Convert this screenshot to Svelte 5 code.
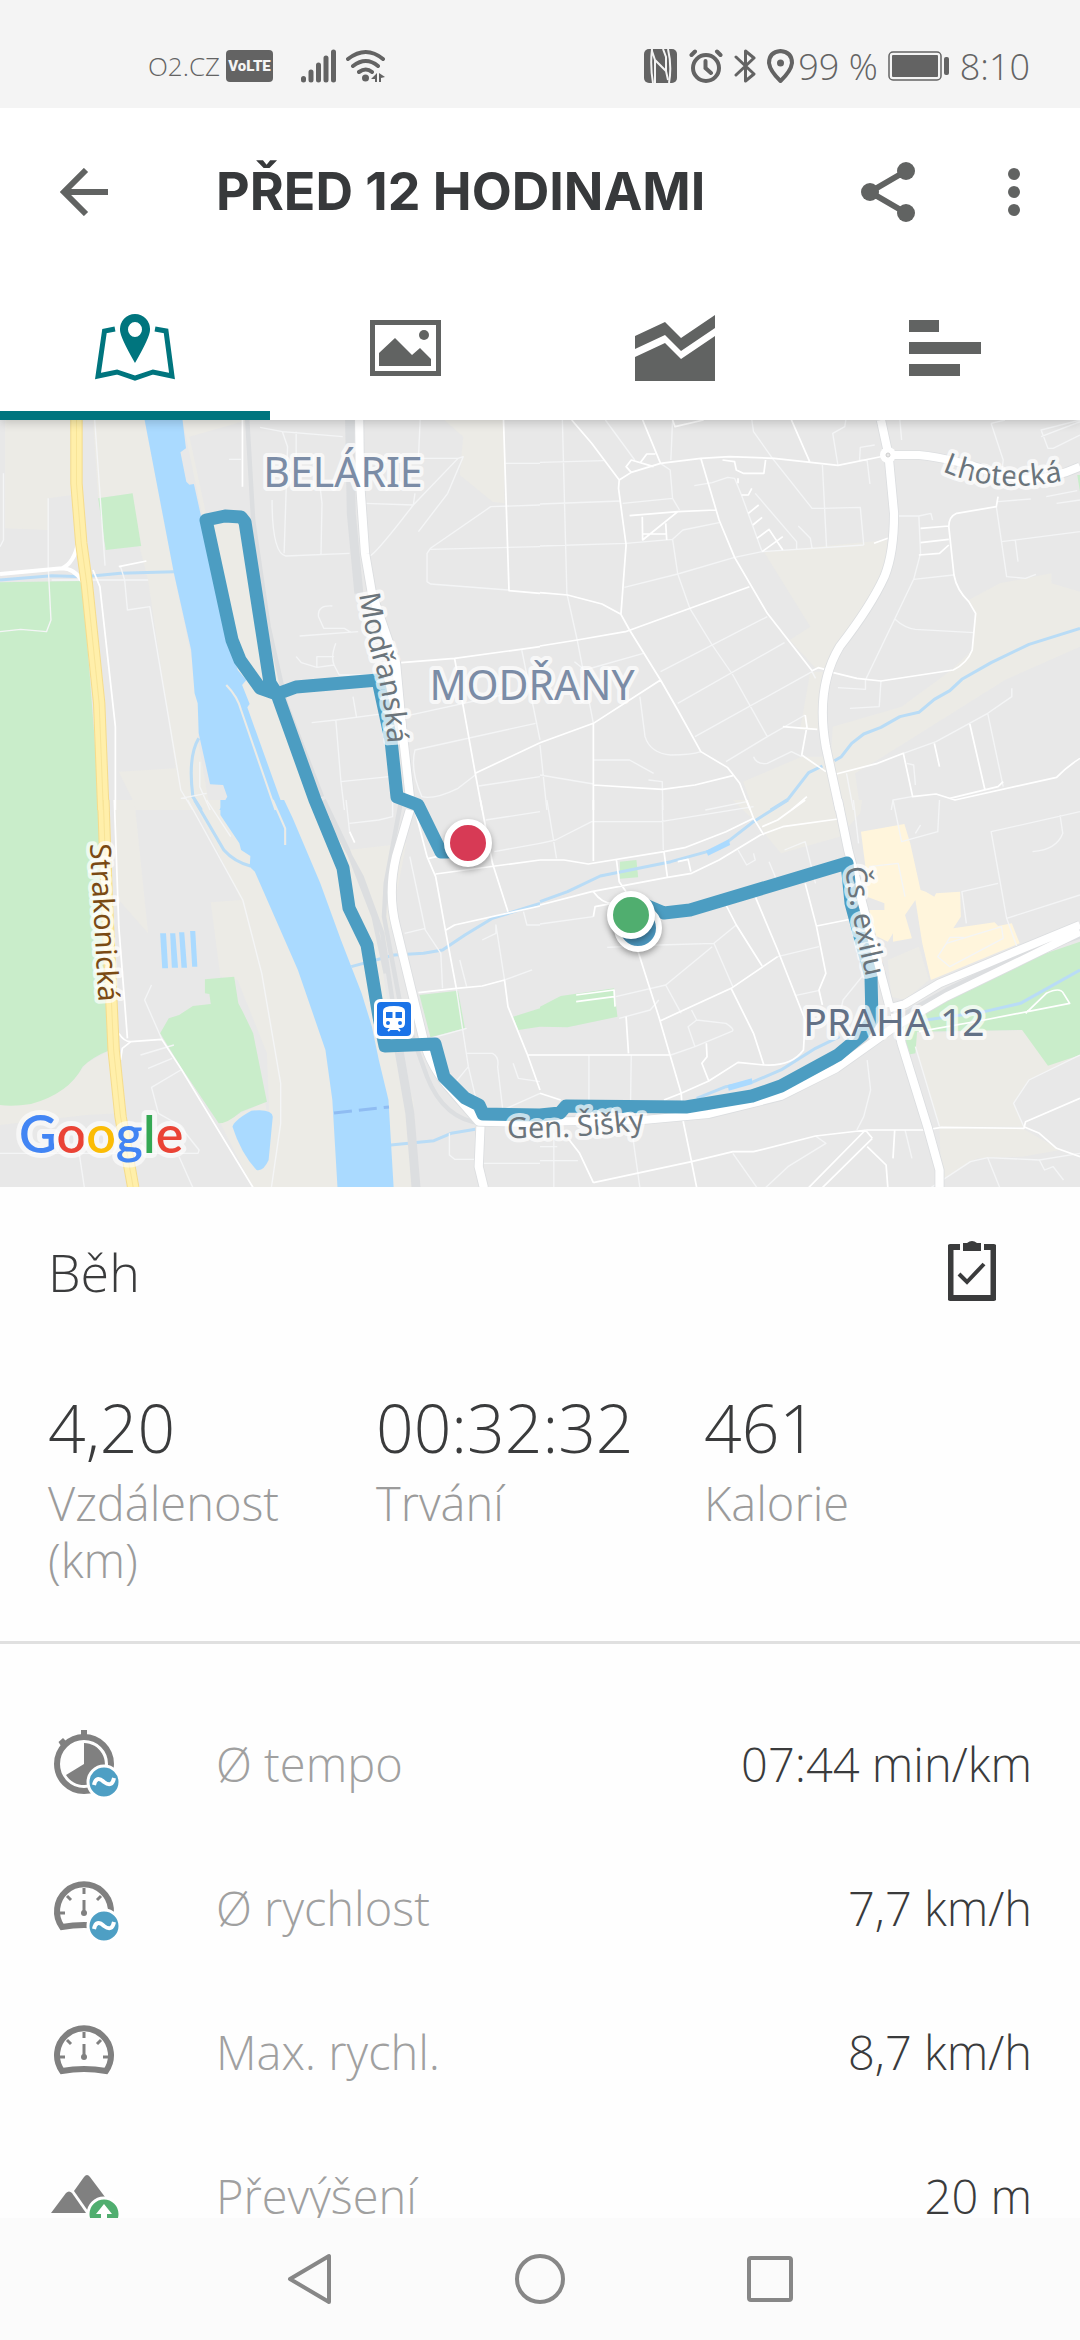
<script>
  // Map artwork is split in four tiles. Each tile has its own drawing grid of 1568 x 1170 units.
  const tiles = [
    {
      id: 'nw', x: 0, y: 420,
      beige: ['M15 0H205L210 225L140 235V330L15 325Z', 'M240 0H420L505 460L580 830L575 960L610 1170H390V1150L345 1055L510 1045L430 480L405 380L385 220L285 235L270 0Z', 'M530 0L720 0L550 50L600 290H720L745 340L790 700L850 900L935 1170H800L700 790L590 300Z', 'M1290 0L1345 50L1335 165L1430 245L1465 250L1462 0Z'],
      green: ['M285 235L385 220L410 378L307 390Z', 'M0 487L240 483L290 1170H0Z'],
      sand: [],
      water: ['M420 0H530L540 85L524 97L541 185L550 194L563 192L583 285L620 450L690 750L715 780L703 795L725 852L718 862L825 1170H637L660 1130L648 1095L610 1093L577 940L574 850L565 820L555 690L505 460Z'],
      streams: 'M0 480L150 467L245 470L350 460L505 455M577 955Q545 1010 560 1130L585 1170',
      spit: 'M657 795Q690 830 700 870L800 1170',
      rail: 'M718 0L735 300L780 620L830 850L935 1130',
      railWide: 'M1015 0L1020 280L1042 520',
      minor: 'M275 0L305 437M140 235V440M10 160V360L0 380M140 440L148 600L135 635L60 628L0 635M150 480H430M350 440L362 480L370 570L435 560L525 1110L560 1170M665 118H700M755 22L820 35L995 50M820 35L835 80L825 400M790 240Q790 400 830 408L1015 400M860 35V160M925 160L935 250L932 405M1075 408Q1100 390 1200 255L1330 115L1345 110L1300 220L1215 335M1060 250L1200 255L1205 220M1220 0L1215 115H1330M1468 130H1568M1568 255L1425 260L1250 385L1240 400V485L1250 492L1475 510M1250 388L1568 380M965 558Q920 555 925 590L940 625H1000L1020 638M870 648L1040 635M860 710L875 728L920 742L970 735Q960 710 975 670M920 742V710H970M970 735L985 765H1085M905 908L975 900L1120 880M975 900L990 1085L1000 1170M990 1085L1130 1070M1025 830L1035 890M1380 1065L1330 1105Q1260 1140 1225 1130Q1190 1050 1205 990L1555 910M1170 890L1568 800M1390 1098L1568 1070M1515 690L1568 960M580 1025V1100L610 1170M525 1135L600 1120',
      streets: 'M345 440L425 423M270 450L290 500L335 920V1170M704 0V200M1462 0L1478 512L1568 520M1165 728L1320 715L1568 680M1320 715L1380 1060L1400 1170M1380 1060L1568 968',
      avenues: 'M0 462L180 445Q215 430 228 365M180 445Q215 445 240 485',
      major: 'M1043 0L1045 180L1060 400L1080 520L1150 730L1165 900L1190 1130',
      highway: 'M222 0V190L236 370L252 490L288 850L300 1170'
    },
    {
      id: 'ne', x: 540, y: 420,
      beige: ['M650 395L1010 360L1000 460L870 680L840 745H800L725 660L785 620Z', 'M1568 515L1485 490V460L1335 490L1245 540L1265 580L1255 690L1195 750L1050 860L850 920L845 1010H760L590 1085L620 1170H930L915 1060L980 1020L1350 780L1568 680Z', 'M785 755H830L815 930H755Z'],
      green: ['M1560 165H1568V215Z'],
      sand: [],
      water: [],
      streams: 'M1568 625L1420 673L1310 728L1225 778L1190 812L1145 838L1100 877L1045 890L990 922L940 942L905 970L875 1010L855 1022M820 1038L780 1058L720 1138L670 1170',
      spit: '', rail: '', railWide: '',
      minor: 'M65 0L78 520L108 660L155 910M0 127L185 122M0 252L235 243M0 378L250 370M240 250L385 235L405 270M350 130L378 150L385 235M385 0L380 120M190 0L275 120M250 370L385 358L415 330L520 308M385 358L400 462L435 565L500 675L560 765L660 950M245 502L400 462L565 412L645 395M350 755L660 590M400 850L710 668M450 950L790 755L800 775M540 1025L660 950L770 885M615 0L620 35L675 115L790 265H820L930 262L940 375M820 135L832 380M645 395L940 375M448 197L500 188L545 172L565 175L585 225L645 395M625 220L745 365V390M750 318L785 355L790 385M888 0L885 20L850 40L865 135M972 75L930 82L928 120L950 122L958 192M1045 0L1050 60M1310 10L1345 120L1340 165M1310 10L1350 0M1568 0L1455 30L1475 85H1490L1568 45M1455 50L1568 5M1040 288H1100L1135 280L1140 300M1100 288L1105 400L1085 478L1030 597L945 780V808L865 803M1085 478L1200 465M1030 597Q1060 625 1090 628L1260 638M990 783L985 860L900 865M1325 260L1355 470L1410 475L1440 463M1340 365L1568 335M1380 360L1388 425M1330 245L1425 237M1470 230L1560 212M1500 250L1568 240M1055 1000L1150 965L1300 880L1370 830V805M1300 880L1345 1100M290 830L305 950Q320 1000 380 1005Q440 1005 467 995M0 1065L155 1092M155 1020H260L330 1060M315 1080L355 1085L357 1170M620 1010Q630 1035 660 1030L730 995L760 1010M0 975L20 1170M100 725L130 750L300 700M1065 1030L1085 1035L1090 1095M1020 1170L1025 1140L1080 1130M480 1170L600 1145M890 1060L910 1170',
      streets: 'M92 0L150 70L230 180L265 157L350 130L467 115L550 110L680 115L865 136L1000 108M298 0L350 130M385 0L392 20L475 0M730 0L783 125M230 180L228 205L250 375L235 583L180 552L80 525L0 518M467 115L520 300L565 412L660 580L790 752L808 743L840 752M0 678L108 660L248 635L608 500M235 583L260 630L350 780L400 870L467 995L545 1043L580 1090L610 1170M0 968L155 910L350 780M155 910V1170M155 1095L355 1108L450 1095L560 1067M840 755L920 775L990 783L1200 750Q1240 730 1255 690L1265 580L1245 545Q1210 510 1202 465L1187 320Q1187 290 1210 280L1325 260L1330 230M860 1062L980 1030L1055 1000L1082 1130L1150 1122L1205 1140L1500 1072Q1530 1040 1568 1015M265 157L250 140L265 120L330 140M290 130L310 102H335M260 287L400 275L510 270M297 290L298 360L400 275M365 310L368 360M300 342H368M530 120L565 125L570 150L590 160H650L655 120M575 190V175M585 225H605L615 205M605 280L635 255M618 315L645 292M630 355L665 328L705 390M645 395L705 350M970 370L1010 355M1105 325L1187 318M1105 368L1187 358M1100 405L1160 400L1187 375M1248 912L1292 1110M1145 970L1160 1040M770 885L775 920L760 1005L830 1055M705 920L805 928M1190 1135L1330 1100L1345 1085M730 1170L775 1130',
      avenues: '',
      major: 'M990 0L1012 105L1028 280Q1028 400 1000 470Q960 560 870 680Q800 800 830 980L870 1170M1010 105H1100Q1200 115 1340 165Q1440 200 1568 140',
      highway: ''
    },
    {
      id: 'sw', x: 0, y: 800,
      beige: ['M0 915L100 905Q200 870 250 790L320 750L345 940L250 945L0 975Z', 'M700 300L612 307L640 530L690 540L775 760L790 1163H1215L1200 900L1140 720L1110 500L1180 130L1010 150L900 0H560Z', 'M735 1163L640 970L770 905L800 1163Z', 'M330 0H390L430 400L345 300Z'],
      green: ['M0 0H288L320 750Q270 770 240 800Q200 880 90 912Q40 920 0 915Z', 'M595 538L680 530L692 610L705 635L735 700L775 905L700 935Q660 970 635 970L525 800L465 700L490 655L520 645L560 618L612 612L608 582L595 580Z', 'M1218 585L1330 572L1350 685L1250 712Z', 'M1490 650L1568 625V680L1505 690Z'],
      sand: [],
      water: ['M640 0H825L850 55L930 250L990 420L1050 580L1080 680L1100 780L1128 900L1143 1163H980L965 900L945 750L865 510L740 215L725 200L727 168L700 150L695 130L640 45Z', 'M675 980Q680 960 730 932Q790 925 792 950L780 1080Q765 1115 745 1110Q700 1060 675 980Z', 'M465 400H482L488 505H471ZM494 400H509L517 503H499ZM520 397H535L543 503H527ZM552 393H567L573 500H558Z'],
      streams: 'M565 0L650 150Q680 185 727 198M1568 310L1430 355L1350 405L1285 450L1230 460L1145 465L1020 500M1135 1035L1260 1022L1310 1000L1380 988',
      spit: 'M792 0L828 85V135',
      rail: 'M940 0L1010 150L1085 350L1120 520M960 60L1050 230L1110 400L1145 640L1190 940M1165 0L1120 250L1115 350L1160 600L1240 830Q1290 960 1400 970L1568 975',
      railWide: 'M1150 700L1190 940L1208 1163',
      minor: 'M545 0L705 300L760 520L815 850V970L788 1163M440 555L420 600L470 718M408 765L505 735M430 805L500 775M525 810L440 862L460 940L520 975L578 1050L575 1060H0M230 1060L245 1163M520 1070L560 1163M1005 0L1015 95M1015 70L1100 60L1140 50V0M1410 60L1568 35M1435 155L1568 130M1190 170L1235 390L1280 460L1285 565M1175 400L1235 385M1400 420L1440 400V375L1465 540L1545 510M1325 565L1360 800L1385 910M1355 760H1430Q1450 770 1445 800L1460 930L1568 880M1250 715L1355 685M1305 1000V1065L1320 1078H1385M1395 1090H1568M1335 480L1355 560M1520 335L1530 375H1568M1490 790L1505 835L1568 845M1320 850L1360 800M600 0L670 110',
      streets: 'M1205 30L1240 170L1265 230L1295 400L1325 565M1245 175L1290 165M1265 222L1568 180M1395 0L1430 190L1475 335M1295 390L1320 375L1568 318M1215 578L1325 565L1400 558L1465 540L1475 620L1530 760L1568 870M1530 765H1568M345 700Q360 725 380 725L470 718L525 805L735 1163M380 725L355 745L350 780M332 0L345 380L370 715M1015 95L1030 128',
      avenues: '',
      major: 'M1190 30L1150 170Q1125 280 1150 380L1230 720Q1250 800 1310 870L1390 965L1568 970M1395 980L1390 1100L1405 1163',
      highway: 'M300 0L310 300L330 750L350 950L387 1163'
    },
    {
      id: 'se', x: 540, y: 800,
      beige: ['M560 0H935L930 40L870 110L700 160L660 110L640 80Z', 'M1010 480L1100 440L1130 540L1060 600L1020 590Z', 'M1090 700L1405 690L1475 795L1568 765L1420 840L1375 910L1405 980H1160L1090 740Z', 'M1160 985H1400L1510 1050L1400 1070L1270 1075L1165 1140Z'],
      green: ['M1568 425L1300 520L1120 615L1060 680L1065 765L1090 760L1095 695L1400 690L1475 797L1568 765Z', 'M0 620L60 588L215 565L225 650L80 682L0 680Z', 'M232 185L280 180L285 232L232 236Z'],
      sand: ['M932 95L1058 72L1075 130L1105 270L1120 275L1145 290L1150 280L1220 275L1222 350L1200 385L1320 367L1330 378L1370 370L1393 430L1135 540L1110 430L1090 300L1060 345L1080 415L1025 425V400L1010 425L960 400L940 330L1000 330V310L950 290L945 200Z'],
      water: ['M482 152L548 118L552 135L488 167Z', 'M545 855L615 835L617 852L548 872Z'],
      streams: 'M720 0L620 65L520 145L380 185L175 228L80 275L0 305M455 895L540 860L620 845L700 810L800 745L870 710M1120 660L1290 635L1395 610L1568 510',
      spit: '',
      rail: 'M0 955L420 950L700 872L860 785L1060 640L1180 570L1380 470L1568 410',
      railWide: '',
      minor: 'M20 0L48 175M0 130L45 120L150 65H350L620 20M355 0L358 150M690 470L810 440M740 587L808 572M195 442L345 435L505 430L560 560M505 430L570 375M365 555L500 440M410 640L365 555L220 590M440 630L455 660L540 670Q570 690 555 695L450 740L430 680L455 660M450 740L380 765M142 765V900M265 765L263 900M230 655L320 630L345 600M155 350L0 372M1025 0L1050 125L1155 95L1160 0M1568 35L1310 95L1355 355L1385 440M1355 355L1568 285M1510 45L1518 100Q1500 150 1430 155M1238 370L1225 275L1330 250M950 780L960 870L940 950L920 990M1060 990L1080 1075M1090 740L1160 980M560 1060L630 1163M1135 1163L1250 1085L1300 1073L1335 1163M1300 1073L1450 1080L1568 1060M1405 980L1375 910L1420 840L1568 765M0 1082H110M40 1000V1163M270 1015L290 1163M655 1163L720 1100L830 1030L800 1008M710 150L770 125L800 250M665 185L685 235M575 150L600 195L625 180L620 160M1450 1080L1465 1110L1490 1100L1520 1140M910 0L925 130M955 200L1040 190L1060 290M1155 470L1180 430L1340 380L1345 415L1190 500ZM1180 430L1190 412H1230M860 690L880 600L935 530M1090 100L1105 75M0 1040H50',
      streets: 'M0 180H70L140 192L360 155L420 143L540 95L620 55L600 0M620 55L650 105M155 0V183M0 315L150 275L370 232L440 220L520 180L640 105L705 80L865 57M360 155L370 232M285 455L345 650L410 880L415 960L440 1085L455 1163M540 315L570 375L645 498M625 290L690 450L770 660L765 750Q730 800 650 795L575 787L490 843L410 880L360 900M690 470L555 565L350 662M555 565L620 700L650 795M770 250L803 380L830 520L810 570L820 615M803 378L905 357M0 765H375M155 1148L440 1085L560 1055H620L800 1008L950 990H1120L1165 982L1405 985L1410 965L1568 895M1405 980L1450 1000L1500 1045L1568 1070M70 1000L115 1060L155 1148M0 880L60 900M222 180L230 245L250 275M400 185L430 178L438 215M155 275Q180 310 210 310L160 320L155 350M250 650L257 760M105 585L215 570L218 620M105 605L215 590M483 730L485 770L470 790L490 843M945 990L780 1163M965 1015L820 1163M945 990L965 1015M950 1040L1005 1095L1010 1163M1030 990L1025 1075M645 80L690 60L770 0M1410 640L1470 580Q1510 560 1520 580L1538 610L1290 660L1100 695',
      avenues: '',
      major: 'M865 0L895 150L1015 620M1015 625L1060 612L1160 550L1300 490L1380 455L1568 375M1030 680L1180 590L1400 480L1568 395M0 965L300 960L490 942L700 888L860 805L1030 680M1030 640L1050 730L1125 980L1160 1110V1163',
      highway: ''
    }
  ];

  const route = 'M448 852H441L418 805L397 797L391 740L378 680L296 687L277 694L260 688L240 660L232 640L206 520L225 516L241 517L245 522L270 683L277 694L315 800L343 868L349 908L367 945L379 1017L385 1046L435 1044L444 1077L465 1098L479 1105L483 1114L540 1115L560 1113L566 1106L686 1107L752 1096L781 1086L838 1055L862 1035L872 1020L871 977L851 903L847 863L690 910L664 913L645 905';

  const stats = [
    { value: '4,20', label: 'Vzdálenost (km)' },
    { value: '00:32:32', label: 'Trvání' },
    { value: '461', label: 'Kalorie' }
  ];

  const details = [
    { icon: 'pace', badge: 'average', label: 'Ø tempo', value: '07:44 min/km' },
    { icon: 'speed', badge: 'average', label: 'Ø rychlost', value: '7,7 km/h' },
    { icon: 'speed', badge: '', label: 'Max. rychl.', value: '8,7 km/h' },
    { icon: 'hills', badge: 'up', label: 'Převýšení', value: '20 m' }
  ];

  const tabs = ['Mapa', 'Fotky', 'Grafy', 'Mezičasy'];
  let active = $state(0);
</script>

{#snippet layer(key, cls)}
  {#each tiles as t (t.id)}
    <g transform="translate({t.x} {t.y}) scale(0.34439 0.33333)">
      {#if Array.isArray(t[key])}
        {#each t[key] as d}<path class={cls} {d} />{/each}
      {:else if t[key]}
        <path class={cls} d={t[key]} />
      {/if}
    </g>
  {/each}
{/snippet}

<div class="screen">
  <div class="status">
    <span class="carrier">O2.CZ</span>
    <span class="volte">VoLTE</span>
    <svg class="signal" width="36" height="34" viewBox="0 0 36 34" aria-hidden="true">
      <path d="M2.500 29.500V31M10 23V31M17.500 16V31M25 9V31M32.500 3V31" fill="none" stroke="currentColor" stroke-width="5" stroke-linecap="round" />
    </svg>
    <svg class="wifi" width="40" height="34" viewBox="0 0 40 34" aria-hidden="true">
      <path d="M2 10Q20 -4 37 10M7 17Q20 7 32 17M13 23Q20 18 26 23" fill="none" stroke="currentColor" stroke-width="4" stroke-linecap="round" />
      <circle cx="19.500" cy="29" r="3.500" fill="currentColor" />
      <path d="M31 24V33H29V30H25ZM33 24V33H35V29L39 28Z" fill="currentColor" />
    </svg>
    <span class="spacer"></span>
    <svg width="34" height="34" viewBox="0 0 34 34" aria-hidden="true">
      <rect width="33" height="34" rx="5" fill="currentColor" />
      <path d="M25 34Q28 17 24 0" fill="none" stroke="#f4f4f4" stroke-width="2" />
      <path d="M8 0Q6 17 9 34M11 34V11L22 22V8L19 0M11 11L8 2M22 22L24 31" fill="none" stroke="#f4f4f4" stroke-width="2" />
    </svg>
    <svg class="alarm" width="34" height="34" viewBox="0 0 34 34" fill="none" stroke="currentColor" stroke-width="4" stroke-linecap="round" aria-hidden="true">
      <circle cx="17" cy="19" r="13" /><path d="M16.500 12V19L22 24M2.500 6L6 2.500M31.500 6L28 2.500" />
    </svg>
    <svg class="bt" width="22" height="36" viewBox="0 0 22 36" fill="none" stroke="currentColor" stroke-width="3" stroke-linejoin="round" stroke-linecap="round" aria-hidden="true">
      <path d="M2 9L20 26L11.500 33V3L20 10L2 27" />
    </svg>
    <svg class="pin" width="27" height="34" viewBox="0 0 27 34" aria-hidden="true">
      <path d="M13.500 2Q25 3 25 14Q24 22 13.500 32Q3 22 2 14Q2 3 13.500 2Z" fill="none" stroke="currentColor" stroke-width="4" stroke-linejoin="round" />
      <circle cx="13.500" cy="14" r="3.500" fill="currentColor" />
    </svg>
    <span class="clock">99 %</span>
    <svg class="battery" width="62" height="30" viewBox="0 0 62 30" aria-hidden="true">
      <rect x="1" y="1" width="52" height="28" rx="4" fill="none" stroke="currentColor" stroke-width="1.500" />
      <rect x="4" y="4" width="46" height="22" rx="1" fill="currentColor" />
      <rect x="56" y="6" width="5" height="18" rx="2" fill="currentColor" />
    </svg>
    <time class="clock">8:10</time>
  </div>

  <header class="toolbar">
    <button class="icon-btn" aria-label="Zpět">
      <svg width="48" height="48" viewBox="0 0 48 48" fill="none" stroke="currentColor" stroke-width="6"><path d="M48 24H5M26 2L4 24L26 46" /></svg>
    </button>
    <h1>PŘED 12 HODINAMI</h1>
    <button class="icon-btn" aria-label="Sdílet">
      <svg width="54" height="60" viewBox="0 0 54 60" fill="currentColor">
        <path d="M45 9L9 30L45 51" fill="none" stroke="currentColor" stroke-width="6" />
        <circle cx="45" cy="9" r="9" /><circle cx="9" cy="30" r="9" /><circle cx="45" cy="51" r="9" />
      </svg>
    </button>
    <button class="icon-btn more" aria-label="Další">
      <svg width="12" height="48" viewBox="0 0 12 48" fill="currentColor"><circle cx="6" cy="6" r="6" /><circle cx="6" cy="24" r="6" /><circle cx="6" cy="42" r="6" /></svg>
    </button>
  </header>

  <nav class="tabs" aria-label="Zobrazení">
    {#each tabs as name, i (name)}
      <button class="tab" class:active={active === i} aria-label={name} onclick={() => (active = i)}>
        <svg width="80" height="68" viewBox="0 0 80 68" fill="currentColor" aria-hidden="true">
          {#if i === 0}
            <path d="M20 15L9.500 17L3 62L22 58L40 64L58 58L77 62L71 17L60 15" fill="none" stroke="currentColor" stroke-width="5" />
            <path fill-rule="evenodd" d="M40 0A15 15 0 0 1 55 16Q55 23 40 49Q25 23 25 16A15 15 0 0 1 40 0ZM40 8A7 7.500 0 1 0 40 23A7 7.500 0 1 0 40 8Z" />
          {:else if i === 1}
            <path fill-rule="evenodd" d="M5 6H76V62H5ZM10 11V57H71V11Z" />
            <path d="M14 52V39L30 24L47 41L55 34L66 45V52Z" /><circle cx="59" cy="21" r="5" />
          {:else if i === 2}
            <path d="M0 22L30 8L46 24L80 1V14L46 37L30 21L0 35Z" /><path d="M0 43L30 29L46 45L80 22V67H0Z" />
          {:else}
            <path d="M4 6H34V18H4ZM4 28H76V40H4ZM4 50H55V62H4Z" />
          {/if}
        </svg>
      </button>
    {/each}
  </nav>

  <section class="map" aria-label="Mapa trasy">
    <svg viewBox="0 420 1080 767" role="img" aria-label="Trasa běhu, Praha 12">
      <rect y="420" width="1080" height="767" fill="#e8e8e8" />
      {@render layer('beige', 'beige')}
      {@render layer('green', 'green')}
      {@render layer('sand', 'sand')}
      {@render layer('streams', 'stream')}
      {@render layer('water', 'water')}
      {@render layer('spit', 'spit')}
      <path d="M334 1113L389 1107" stroke="#8fbcf2" stroke-width="3" stroke-dasharray="18 7" />
      {@render layer('railWide', 'rail-wide')}
      {@render layer('rail', 'rail')}
      {@render layer('minor', 'minor')}
      {@render layer('streets', 'street')}
      {@render layer('avenues', 'avenue')}
      {@render layer('major', 'major-edge')}
      {@render layer('major', 'major')}
      {@render layer('highway', 'highway-edge')}
      {@render layer('highway', 'highway')}
      {@render layer('highway', 'highway-line')}
      <circle cx="888" cy="455" r="8" fill="#fff" />
      <circle cx="888" cy="455" r="2" fill="#e8e8e8" stroke="#d0d0d0" />

      <path class="route" d={route} />

      <defs>
        <path id="p-modr" d="M359 594Q366 640 377 672Q386 706 388 750" />
        <path id="p-strak" d="M90 844L99 1010" />
        <path id="p-lhot" d="M942 471Q1000 497 1075 478" />
        <path id="p-exilu" d="M845 868Q852 920 869 990" />
        <path id="p-gen" d="M507 1138Q580 1139 650 1129" />
      </defs>
      <g class="label street-name">
        <text><textPath href="#p-modr">Modřanská</textPath></text>
        <text class="brown"><textPath href="#p-strak">Strakonická</textPath></text>
        <text><textPath href="#p-lhot">Lhotecká</textPath></text>
        <text><textPath href="#p-exilu">Čs. exilu</textPath></text>
        <text><textPath href="#p-gen">Gen. Šišky</textPath></text>
      </g>
      <g class="label district" text-anchor="middle">
        <text x="343" y="487">BELÁRIE</text>
        <text x="532" y="700">MODŘANY</text>
        <text x="894" y="1036" class="dark">PRAHA 12</text>
      </g>

      <g transform="translate(394 1019)">
        <rect x="-20" y="-20" width="40" height="40" rx="6" fill="#fff" />
        <rect x="-17" y="-17" width="34" height="34" rx="4" fill="#1a73e8" />
        <path fill="#fff" fill-rule="evenodd" d="M-11 -8Q-11 -13 0 -13Q11 -13 11 -8V4Q11 9 6 9H-6Q-11 9 -11 4ZM-8 -7V-1H-1.500V-7ZM1.500 -7V-1H8V-7ZM-6 2A2 2 0 1 0 -6 6A2 2 0 1 0 -6 2ZM6 2A2 2 0 1 0 6 6A2 2 0 1 0 6 2Z" />
        <path d="M-6 12L-3 9M6 12L3 9M-4 10H4" stroke="#fff" stroke-width="2" />
      </g>

      <g class="markers">
        <circle cx="468" cy="843" r="21" fill="#d73a55" />
        <circle cx="638" cy="928" r="21" fill="#4a94bb" />
        <circle cx="631" cy="915" r="21" fill="#50ae6f" />
      </g>

      <text class="google" x="19" y="1153"><tspan fill="#4285f4">G</tspan><tspan fill="#ea4335">o</tspan><tspan fill="#fbbc05">o</tspan><tspan fill="#4285f4">g</tspan><tspan fill="#34a853">l</tspan><tspan fill="#ea4335">e</tspan></text>
    </svg>
  </section>

  <main class="content">
    <div class="activity">
      <h2>Běh</h2>
      <button class="icon-btn note" aria-label="Souhrn">
        <svg width="48" height="60" viewBox="0 0 48 60" aria-hidden="true">
          <path d="M12 6H2.500V57H45.500V6H36" fill="none" stroke="currentColor" stroke-width="6" stroke-linejoin="round" />
          <path d="M15 2H19Q24 -2 29 2H33V10H15Z" fill="currentColor" />
          <path d="M11 33L19 41L36 23" fill="none" stroke="currentColor" stroke-width="4" />
        </svg>
      </button>
    </div>

    <dl class="stats">
      {#each stats as s (s.label)}
        <div class="stat"><dd>{s.value}</dd><dt>{s.label}</dt></div>
      {/each}
    </dl>

    <dl class="details">
      {#each details as r (r.label)}
        <div class="row">
          <svg width="72" height="72" viewBox="0 0 72 72" aria-hidden="true">
            {#if r.icon === 'pace'}
              <circle cx="36" cy="36" r="27" fill="none" stroke="#808080" stroke-width="6" />
              <path d="M33 2H39V9H33ZM10.500 14L15 10L18 13L13 18Z" fill="#808080" />
              <path d="M36 36V15A21 21 0 1 1 18 47Z" fill="#808080" />
            {:else if r.icon === 'speed'}
              <path d="M14 55A27 27 0 1 1 58 55Q36 51 14 55Z" fill="none" stroke="#808080" stroke-width="6" />
              <path d="M36 16V22M12 41H17M60 41H55M19 24L23 28M53 24L49 28M36 28V41" stroke="#808080" stroke-width="3" />
              <circle cx="36" cy="41" r="3" fill="#808080" />
            {:else}
              <path d="M26 31L36 17Q39 13 42 17L60 41L45 53L40 51Z" fill="#808080" />
              <path d="M3 53L18 33Q21 30 24 33L38 53Z" fill="#808080" />
            {/if}
            {#if r.badge === 'average'}
              <circle cx="56" cy="54" r="16" fill="#4e9fc4" stroke="#fff" stroke-width="3" />
              <path d="M46 57Q48 47 56 54Q64 60 66 50" fill="none" stroke="#fff" stroke-width="4" />
            {:else if r.badge === 'up'}
              <circle cx="56" cy="54" r="16" fill="#50ae6f" stroke="#fff" stroke-width="3" />
              <path d="M56 44L64 54H59V64H53V54H48Z" fill="#fff" />
            {/if}
          </svg>
          <dt>{r.label}</dt>
          <dd>{r.value}</dd>
        </div>
      {/each}
    </dl>
  </main>

  <nav class="system" aria-label="Systém">
    <button aria-label="Zpět na předchozí"><svg width="48" height="52" viewBox="0 0 48 52"><path d="M43 3V49L4 26Z" /></svg></button>
    <button aria-label="Domů"><svg width="52" height="52" viewBox="0 0 52 52"><circle cx="26" cy="26" r="23" /></svg></button>
    <button aria-label="Přehled"><svg width="48" height="52" viewBox="0 0 48 52"><rect x="3" y="5" width="42" height="42" rx="2" /></svg></button>
  </nav>
</div>

<style>
  :global(body) {
    background: #fff;
  }

  .screen {
    display: flex;
    flex-direction: column;
    height: 100vh;
    background: #fefefe;
    color: #3a3b3c;
    font-family: 'Open Sans', 'Noto Sans', sans-serif;
    font-weight: 300;
  }

  svg {
    display: block;
    flex: none;
  }

  button {
    display: flex;
    align-items: center;
    justify-content: center;
    padding: 0;
    border: 0;
    background: none;
    color: #616362;
    cursor: pointer;
  }

  h1, h2, dl, dt, dd {
    margin: 0;
  }

  .status {
    display: flex;
    align-items: center;
    box-sizing: border-box;
    height: 108px;
    padding: 24px 50px 0 148px;
    background: #f4f4f4;
    color: #636363;
  }

  .carrier {
    font-size: 26px;
  }

  .volte {
    width: 47px;
    margin-left: 6px;
    border-radius: 4px;
    background: #636363;
    color: #f4f4f4;
    font: 900 15px/32px Roboto, sans-serif;
    text-align: center;
  }

  .signal {
    margin-left: 28px;
  }

  .wifi {
    margin-left: 9px;
  }

  .spacer {
    flex: 1;
  }

  .alarm {
    margin-left: 11px;
  }

  .bt {
    margin-left: 11px;
  }

  .pin {
    margin-left: 11px;
  }

  .clock {
    margin-left: 4px;
    font-size: 36px;
    white-space: nowrap;
  }

  .battery {
    margin: 0 6px 0 10px;
  }

  .toolbar {
    position: relative;
    z-index: 2;
    display: flex;
    align-items: center;
    height: 168px;
    padding: 0 60px;
    background: #fff;
  }

  h1 {
    flex: 1;
    margin-left: 108px;
    color: #37393b;
    font: 700 52px/64px Inter, sans-serif;
    white-space: nowrap;
  }

  .more {
    margin-left: 93px;
  }

  .tabs {
    position: relative;
    z-index: 1;
    display: grid;
    grid-template-columns: repeat(4, 1fr);
    background: #fff;
    box-shadow: 0 2px 10px rgba(0, 0, 0, 0.2);
  }

  .tab {
    box-sizing: border-box;
    height: 144px;
    padding-top: 9px;
    border-bottom: 9px solid transparent;
  }

  .tab.active {
    border-color: #00757e;
    color: #00757e;
  }

  .map svg {
    width: 100%;
    height: auto;
  }

  .map path {
    stroke-linejoin: round;
  }

  .beige { fill: #ecebe6; }
  .green { fill: #c9edca; }
  .sand { fill: #fff5dc; }
  .water { fill: #aadaff; }
  .stream { fill: none; stroke: #b9dcf6; stroke-width: 9; }
  .spit { fill: none; stroke: #ecebe6; stroke-width: 6; }
  .rail { fill: none; stroke: #dcdee0; stroke-width: 13; }
  .rail-wide { fill: none; stroke: #dcdee0; stroke-width: 26; }
  .minor { fill: none; stroke: #f4f5f6; stroke-width: 4; }
  .street { fill: none; stroke: #fff; stroke-width: 5; }
  .avenue { fill: none; stroke: #fff; stroke-width: 12; }
  .major-edge { fill: none; stroke: #dcdee0; stroke-width: 29; }
  .major { fill: none; stroke: #fff; stroke-width: 24; }
  .highway-edge { fill: none; stroke: #f5dc8d; stroke-width: 36; }
  .highway { fill: none; stroke: #ffefaa; stroke-width: 30; }
  .highway-line { fill: none; stroke: #f8e498; stroke-width: 3; }

  .route {
    fill: none;
    stroke: #4c9dc2;
    stroke-width: 13;
    stroke-linecap: round;
  }

  .label {
    font-family: 'Noto Sans', 'Open Sans', sans-serif;
    font-weight: 400;
    paint-order: stroke;
    stroke: rgba(255, 255, 255, 0.7);
    stroke-width: 8px;
    stroke-linejoin: round;
  }

  .street-name { fill: #6b757c; font-size: 29px; }
  .brown { fill: #7a4a14; }
  .district { fill: #7b8ca6; font-size: 41px; }
  .dark { fill: #637186; font-size: 39px; }

  .markers circle {
    stroke: #fff;
    stroke-width: 6;
    filter: drop-shadow(0 3px 3px rgba(0, 0, 0, 0.35));
  }

  .google {
    font: 600 52px Lato, sans-serif;
    paint-order: stroke;
    stroke: rgba(255, 255, 255, 0.6);
    stroke-width: 10px;
    stroke-linejoin: round;
  }

  .content {
    flex: 1;
    min-height: 0;
    overflow: hidden auto;
    scrollbar-width: none;
  }

  .activity {
    display: flex;
    align-items: center;
    justify-content: space-between;
    height: 168px;
    padding: 0 84px 0 48px;
  }

  h2 {
    font-size: 52px;
    font-weight: 300;
  }

  .note {
    color: #3a3b3c;
  }

  .stats {
    display: grid;
    grid-template-columns: repeat(3, 1fr);
    padding: 24px 48px 52px;
    border-bottom: 3px solid #e0e0e0;
  }

  .stat {
    display: flex;
    flex-direction: column;
  }

  .stat dd {
    font-size: 66px;
    line-height: 96px;
  }

  .stat dt {
    padding-right: 60px;
    color: #9b9b9b;
    font-size: 47px;
    line-height: 57px;
  }

  .details {
    padding: 48px 48px 0;
  }

  .row {
    display: flex;
    align-items: center;
    height: 144px;
    font-size: 47px;
  }

  .row dt {
    flex: 1;
    margin-left: 96px;
    color: #a0a0a0;
  }

  .system {
    display: flex;
    align-items: center;
    justify-content: center;
    gap: 180px;
    height: 122px;
    background: #fbfbfb;
  }

  .system svg {
    fill: none;
    stroke: #878787;
    stroke-width: 4;
    stroke-linejoin: round;
  }
</style>
